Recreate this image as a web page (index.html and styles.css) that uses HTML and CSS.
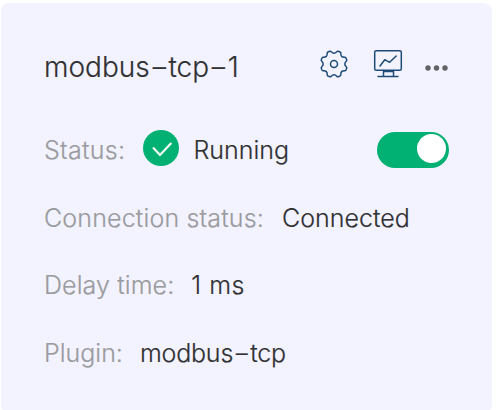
FILE: index.html
```html
<!DOCTYPE html>
<html lang="en">
<head>
<meta charset="utf-8">
<title>modbus-tcp-1</title>
<link rel="stylesheet" href="styles.css">
</head>
<body>
<article class="card">
  <header class="card-header">
    <h1 class="title">modbus<span class="dash">-</span>tcp<span class="dash">-</span>1</h1>
    <div class="actions">
      <svg class="icon-gear" width="30" height="30" viewBox="0 0 30 30">
        <path d="M10.8 2.3Q11.6 2 12.2 2.8Q15 5.6 17.8 2.8Q18.4 2 19.2 2.3L21 3Q21.9 3.4 21.8 4.4Q21.6 8.4 25.6 8.2Q26.6 8.1 27 9L27.7 10.8Q28 11.6 27.2 12.2Q24.4 15 27.2 17.8Q28 18.4 27.7 19.2L27 21Q26.6 21.9 25.6 21.8Q21.6 21.6 21.8 25.6Q21.9 26.6 21 27L19.2 27.7Q18.4 28 17.8 27.2Q15 24.4 12.2 27.2Q11.6 28 10.8 27.7L9 27Q8.1 26.6 8.2 25.6Q8.4 21.6 4.4 21.8Q3.4 21.9 3 21L2.3 19.2Q2 18.4 2.8 17.8Q5.6 15 2.8 12.2Q2 11.6 2.3 10.8L3 9Q3.4 8.1 4.4 8.2Q8.4 8.4 8.2 4.4Q8.1 3.4 9 3Z"/>
        <circle cx="15" cy="15" r="3.5"/>
      </svg>
      <svg class="icon-monitor" width="30" height="30" viewBox="0 0 30 30">
        <rect x="1.7" y="1.7" width="26.6" height="19.6" rx="1.5"/>
        <path d="M7 17L11.8 10.7L16.6 13.3L23.2 7M10.5 21.5V27.5M20.5 21.5V27.5M10.5 22.5H20.5M5 27.6H25"/>
      </svg>
      <svg class="icon-more" width="24" height="6" viewBox="0 0 24 6">
        <circle cx="3" cy="3" r="2.7"/><circle cx="11.5" cy="3" r="2.7"/><circle cx="20" cy="3" r="2.7"/>
      </svg>
    </div>
  </header>
  <div class="row">
    <span class="label status-label">Status:</span>
    <svg class="check" width="36" height="36" viewBox="0 0 36 36"><circle cx="18" cy="18" r="18"/><path d="M10 17.5L17 25L28.3 13"/></svg>
    <span class="value running">Running</span>
    <span class="switch"><span class="knob"></span></span>
  </div>
  <div class="row connection-row">
    <span class="label connection-label">Connection status:</span>
    <span class="value connected">Connected</span>
  </div>
  <div class="row">
    <span class="label delay-label">Delay time:</span>
    <span class="value delay">1 ms</span>
  </div>
  <div class="row">
    <span class="label plugin-label">Plugin:</span>
    <span class="value plugin">modbus<span class="dash">-</span>tcp</span>
  </div>
</article>
</body>
</html>
```

FILE: styles.css
```css
body {
  margin: 0;
  background: #fff;
  font-family: Inter, "Liberation Sans", sans-serif;
  overflow: hidden;
}
.card {
  box-sizing: border-box;
  width: 491px;
  height: 408px;
  margin: 3px 0 0 1px;
  padding: 44px 43px 0;
  border-radius: 8px 8px 5px 5px;
  background: #f3f3ff;
}
.card-header, .row, .actions { display: flex; align-items: center; }
.card-header { height: 40px; margin-bottom: 29px; }
.title {
  margin: 0;
  font-size: 28px;
  font-weight: 300;
  color: #303133;
  line-height: 40px;
  white-space: nowrap;
  -webkit-text-stroke: 0.2px currentColor;
}
.dash { display: inline-block; transform: scaleX(1.55); margin: 0 3px; }
.actions { margin-left: auto; margin-top: -7px; }
.actions svg { fill: none; stroke: #1e4b76; stroke-width: 1.5; stroke-linecap: round; stroke-linejoin: round; }
.icon-gear { margin-right: 24px; }
.icon-monitor { margin-right: 22px; }
.actions .icon-more { fill: #606266; stroke: none; margin-top: 9px; }
.row { box-sizing: border-box; height: 67.6px; }
.connection-row { padding-top: 1.5px; }
.label, .value {
  font-size: 25px;
  font-weight: 300;
  line-height: 36px;
  white-space: nowrap;
  -webkit-text-stroke: 0.2px currentColor;
}
.label { color: #9a9b9e; }
.value { color: #303133; }
.status-label { letter-spacing: 0.3px; }
.connection-label { letter-spacing: 0.16px; }
.delay-label { letter-spacing: 0.1px; }
.check { margin: 0 0 4px 18px; fill: #00b173; }
.check path { fill: none; stroke: #fff; stroke-width: 2; }
.running { margin-left: 14px; }
.connected { margin-left: 18px; }
.delay { margin-left: 17px; letter-spacing: 0.5px; }
.plugin { margin-left: 17px; letter-spacing: -0.2px; }
.switch {
  box-sizing: border-box;
  display: flex;
  justify-content: flex-end;
  width: 72px;
  height: 36px;
  margin-left: auto;
  padding: 2px 3px;
  border-radius: 18px;
  background: #00b173;
}
.knob { width: 29px; height: 29px; border-radius: 50%; background: #fff; }
```
